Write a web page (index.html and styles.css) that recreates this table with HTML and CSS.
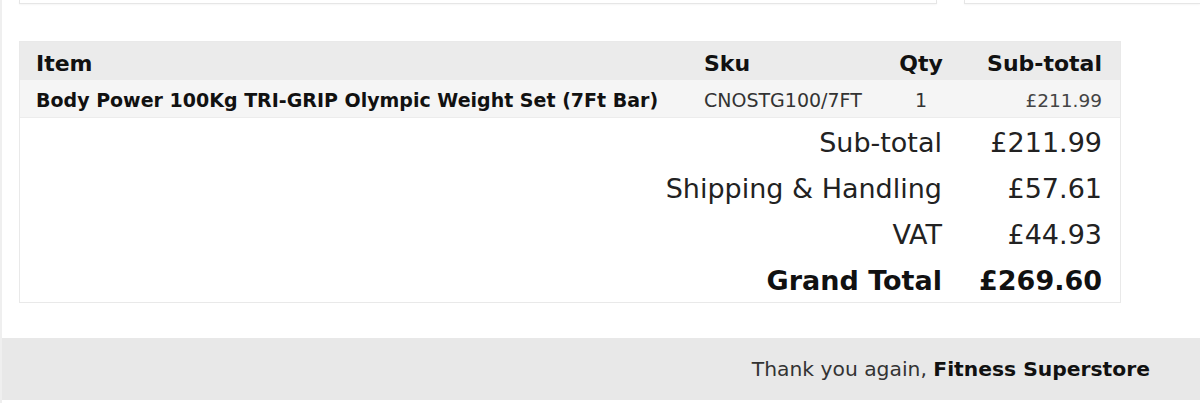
FILE: index.html
```html
<!DOCTYPE html>
<html lang="en">
<head>
<meta charset="utf-8">
<title>Order summary</title>
<link rel="stylesheet" href="styles.css">
</head>
<body>
<div class="page">
  <div class="top-cards">
    <div class="card card-left"></div>
    <div class="card card-right"></div>
  </div>

  <table class="order">
    <colgroup>
      <col class="c-item">
      <col class="c-sku">
      <col class="c-qty">
      <col class="c-sub">
    </colgroup>
    <thead>
      <tr class="head-row">
        <th class="item">Item</th>
        <th class="sku">Sku</th>
        <th class="qty">Qty</th>
        <th class="sub">Sub-total</th>
      </tr>
    </thead>
    <tbody>
      <tr class="line-row">
        <td class="item name">Body Power 100Kg TRI-GRIP Olympic Weight Set (7Ft Bar)</td>
        <td class="sku">CNOSTG100/7FT</td>
        <td class="qty">1</td>
        <td class="sub">£211.99</td>
      </tr>
      <tr class="total-row first">
        <td class="label" colspan="3">Sub-total</td>
        <td class="amount">£211.99</td>
      </tr>
      <tr class="total-row">
        <td class="label" colspan="3">Shipping &amp; Handling</td>
        <td class="amount">£57.61</td>
      </tr>
      <tr class="total-row">
        <td class="label" colspan="3">VAT</td>
        <td class="amount">£44.93</td>
      </tr>
      <tr class="total-row grand">
        <td class="label" colspan="3">Grand Total</td>
        <td class="amount">£269.60</td>
      </tr>
    </tbody>
  </table>

  <div class="footer">
    <p>Thank you again, <strong>Fitness Superstore</strong></p>
  </div>
</div>
</body>
</html>
```

FILE: styles.css
```css
html, body {
  margin: 0;
  padding: 0;
  background: #ffffff;
}

body {
  font-family: "DejaVu Sans", Verdana, sans-serif;
  color: #222;
}

.page {
  border-left: 2px solid #efefef;
  min-height: 403px;
  box-sizing: border-box;
}

.top-cards {
  display: flex;
  gap: 27px;
  padding-left: 17px;
}

.card {
  height: 3px;
  border: 1px solid #e6e6e6;
  border-top: none;
  box-shadow: 0 1px 2px rgba(0, 0, 0, 0.04);
}

.card-left {
  width: 916px;
}

.card-right {
  flex: 1;
  border-right: none;
}

.order {
  margin: 37px 0 0 17px;
  width: 1102px;
  table-layout: fixed;
  border-collapse: separate;
  border-spacing: 0;
  border: 1px solid #e9e9e9;
}

.c-item { width: 667px; }
.c-sku { width: 194px; }
.c-qty { width: 80px; }
.c-sub { width: 159px; }

.order th,
.order td {
  padding: 0;
  white-space: nowrap;
}

.head-row th {
  height: 33px;
  padding-top: 5px;
  background: #ebebeb;
  font-size: 22px;
  font-weight: bold;
  color: #111;
  text-align: left;
  vertical-align: middle;
}

.line-row td {
  height: 34px;
  padding-top: 3px;
  background: #f5f5f5;
  font-size: 19px;
  color: #333;
  vertical-align: middle;
  border-bottom: 1px solid #ececec;
}

.order .item {
  padding-left: 16px;
}

.order .sku {
  padding-left: 17px;
  text-align: left;
}

.order .qty {
  text-align: center;
}

.order .sub {
  text-align: right;
  padding-right: 18px;
}

.line-row .name {
  font-size: 19px;
  font-weight: bold;
  color: #111;
}

.line-row .sub {
  font-size: 18.5px;
  color: #444;
}

.total-row td {
  height: 43px;
  padding-top: 3px;
  font-size: 27px;
  color: #222;
  text-align: right;
  vertical-align: middle;
}

.total-row .label {
  padding-right: 19px;
}

.total-row .amount {
  padding-right: 18px;
}

.total-row.grand td {
  font-weight: bold;
  color: #111;
}

.footer {
  margin-top: 35px;
  height: 62px;
  background: #e8e8e8;
  display: flex;
  align-items: center;
  justify-content: flex-end;
  padding-right: 50px;
}

.footer p {
  margin: 0;
  font-size: 20.3px;
  color: #333;
}

.footer strong {
  color: #111;
}
```
